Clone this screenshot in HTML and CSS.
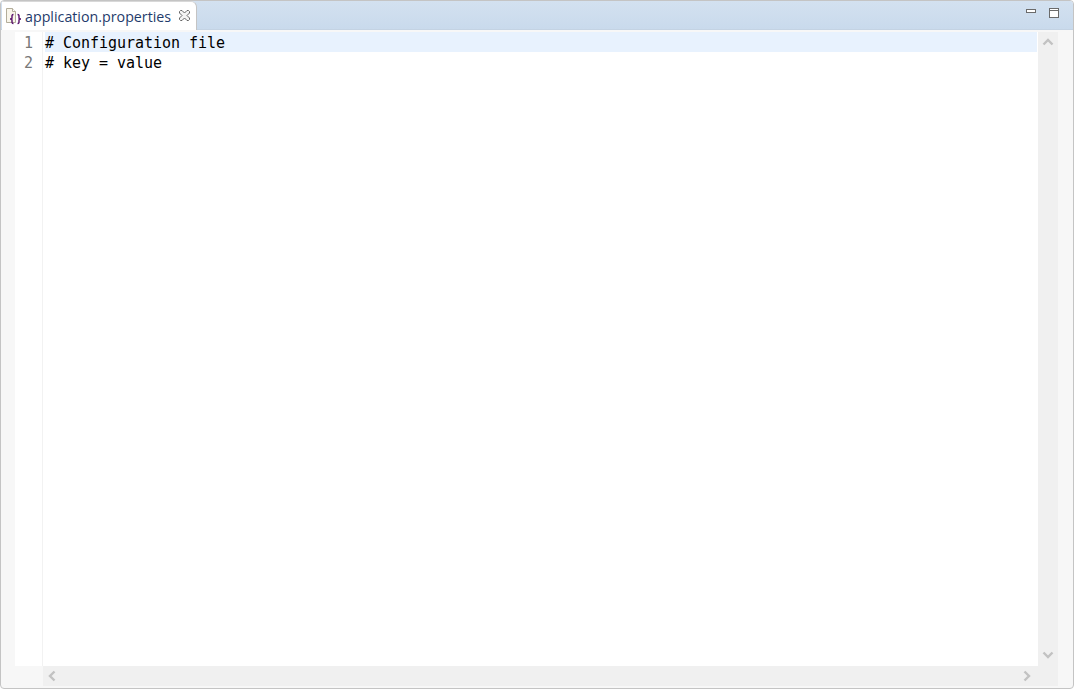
FILE: index.html
```html
<!DOCTYPE html>
<html lang="en">
<head>
<meta charset="utf-8">
<title>application.properties</title>
<link rel="stylesheet" href="styles.css">
</head>
<body>
<div class="frame">
  <div class="tabbar">
    <div class="tab">
      <svg class="file-icon" width="17" height="18" viewBox="0 0 17 18">
        <path d="M1.500 .5H7.500L10.500 3.500V14.500H1.500Z" fill="#f8f5ea" stroke="#b3ad9a"/>
        <path d="M7.500 .5V3.500H10.500" fill="#fff" stroke="#b3ad9a"/>
        <path d="M8.500 6.500C6 6.500 7.500 9.500 6.800 10.500C6.500 11 5.800 11 5 11C5.800 11 6.500 11 6.800 11.500C7.500 12.500 6 15.500 8.500 15.500" fill="none" stroke="#5f1a70" stroke-width="1.500"/>
        <path d="M12.500 6.500C15 6.500 13.500 9.500 14.200 10.500C14.500 11 15.200 11 16 11C15.200 11 14.500 11 14.200 11.500C13.500 12.500 15 15.500 12.500 15.500" fill="none" stroke="#5f1a70" stroke-width="1.500"/>
      </svg>
      <span class="tab-label">application.properties</span>
      <svg class="close-icon" width="11" height="11" viewBox="0 0 11 11">
        <path d="M1.500 .5H3L5.500 3L8 .5H9.500L10.500 1.500V3L8 5.500L10.500 8V9.500L9.500 10.500H8L5.500 8L3 10.500H1.500L.5 9.500V8L3 5.500L.5 3V1.500Z" fill="#f4f4f4" stroke="#666"/>
      </svg>
    </div>
    <div class="tab-tools">
      <svg width="10" height="5" viewBox="0 0 10 5"><rect x=".5" y=".5" width="9" height="3" fill="#fff" stroke="#6b6b6b"/></svg>
      <svg width="10" height="10" viewBox="0 0 10 10"><rect x=".5" y=".5" width="9" height="9" fill="#fff" stroke="#6b6b6b"/><path d="M1 2.500H9" stroke="#6b6b6b"/></svg>
    </div>
  </div>
  <div class="body">
    <div class="editor-area">
      <div class="editor-row">
        <div class="ruler">
          <div class="line-no">1</div>
          <div class="line-no">2</div>
        </div>
        <div class="code">
          <div class="line current"># Configuration file</div>
          <div class="line"># key = value</div>
        </div>
        <div class="vscroll">
          <svg width="14" height="8" viewBox="0 0 14 8"><path d="M2.500 6.500L7 2L11.500 6.500" fill="none" stroke="#c2c2c2" stroke-width="2.400"/></svg>
          <svg width="14" height="8" viewBox="0 0 14 8"><path d="M2.500 1.500L7 6L11.500 1.500" fill="none" stroke="#c2c2c2" stroke-width="2.400"/></svg>
        </div>
      </div>
      <div class="hscroll-row">
        <div class="hscroll-spacer"></div>
        <div class="hscroll">
          <svg width="8" height="14" viewBox="0 0 8 14"><path d="M6.500 2.500L2 7L6.500 11.500" fill="none" stroke="#c2c2c2" stroke-width="2.400"/></svg>
          <svg width="8" height="14" viewBox="0 0 8 14"><path d="M1.500 2.500L6 7L1.500 11.500" fill="none" stroke="#c2c2c2" stroke-width="2.400"/></svg>
        </div>
      </div>
    </div>
  </div>
</div>
</body>
</html>
```

FILE: styles.css
```css
* { box-sizing: border-box; }
html, body { margin: 0; height: 100%; background: #fff; overflow: hidden; }
.frame {
  width: 1074px;
  height: 689px;
  display: flex;
  flex-direction: column;
  border: 1px solid #c4c4c4;
  border-radius: 4px;
  overflow: hidden;
  background: #f7f7f7;
}
.tabbar {
  height: 29px;
  flex: none;
  display: flex;
  justify-content: space-between;
  background: linear-gradient(#d3e1f0, #c9daec);
  border-bottom: 1px solid #c4d3e3;
}
.tab {
  width: 195px;
  height: 29px;
  margin-left: 1px;
  display: flex;
  align-items: center;
  padding: 2px 0 0 3px;
  background: #fff;
  border: 1px solid #c4c4c4;
  border-bottom: none;
  border-left: none;
  border-radius: 0 6px 0 0;
  border-top-color: #d8d8d8;
}
.file-icon { flex: none; }
.tab-label {
  margin-left: 3px;
  font: 14.25px/18px "Open Sans", "Noto Sans", sans-serif;
  color: #1f3b6b;
  white-space: nowrap;
}
.close-icon { flex: none; margin: -4px 0 0 8px; }
.tab-tools { display: flex; align-items: flex-start; gap: 13px; padding: 7px 14px 0 0; }
.tab-tools svg:first-child { margin-top: 1px; }
.body { flex: 1; padding: 2px 15px 2px 14px; min-height: 0; }
.editor-area { height: 100%; display: flex; flex-direction: column; background: #fff; }
.editor-row { flex: 1; display: flex; min-height: 0; }
.ruler {
  width: 28px;
  flex: none;
  border-right: 1px solid #f2f2f2;
  padding: 1px 9px 0 0;
  font: 15px/20px "DejaVu Sans Mono", monospace;
  color: #787878;
  text-align: right;
}
.code {
  flex: 1;
  padding-left: 2px;
  font: 15px/20px "DejaVu Sans Mono", monospace;
  letter-spacing: -0.03px;
  color: #000;
}
.line { height: 20px; padding-top: 1px; white-space: pre; }
.current { background: #e8f2fe; }
.vscroll {
  width: 20px;
  flex: none;
  background: #f0f0f0;
  display: flex;
  flex-direction: column;
  justify-content: space-between;
  align-items: center;
  padding: 6px 0 7px;
  margin-left: 1px;
}
.hscroll-row { flex: none; height: 20px; display: flex; background: #f7f7f7; }
.hscroll-spacer { width: 28px; flex: none; }
.hscroll {
  flex: 1;
  background: #f0f0f0;
  display: flex;
  justify-content: space-between;
  align-items: center;
  padding: 0 27px 0 5px;
}
```
